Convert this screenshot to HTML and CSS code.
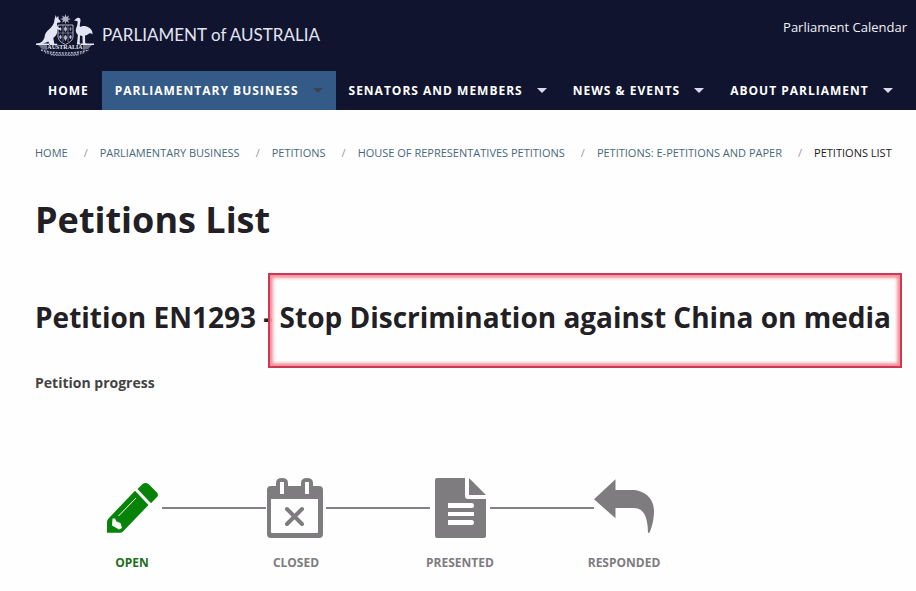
FILE: index.html
```
<!DOCTYPE html>
<html lang="en">
<head>
    <meta charset="UTF-8">
    <meta name="viewport" content="width=device-width, initial-scale=1.0">
    <title>Petitions List - Parliament of Australia</title>
    <link rel="stylesheet" href="styles.css">
</head>
<body>
    <header class="site-header">
        <div class="header-top">
            <a class="logo" href="#">
                <!-- Coat of arms -->
                <svg class="crest" viewBox="0 0 58 42" width="58" height="42" fill="currentColor" aria-hidden="true">
                    <path d="M29.500 0l1 3 2.500-1.500-1 2.700 3 .8-3 1 1 2.800-2.500-1.500-1 2.700-1-2.700-2.500 1.500 1-2.800-3-1 3-.8-1-2.700 2.500 1.500z" opacity=".75"/>
                    <!-- kangaroo -->
                    <path d="M18.500 5.500l1.200-4.500 1 3 1.500-2.300.5 3.500 2 2-.8 1.300-2.700.2c-.5 2 0 3.200 1 4.500l3 1.500-.5 1.300-3.500-.8c.4 2.200 0 4.500-1.400 6.200l-2.500 2.500 1 5.800h3v1.200h-7.500l-1.500-3.500C9.500 28.800 6.500 30.500 1 30.800v-1c4-.8 6.500-2.800 7.500-6.300.2-3.500 2-6.300 5-8.500 2.700-2.500 5-5.500 5-9.500z"/>
                    <!-- emu -->
                    <path d="M38 6.500l3-2.500c2-.7 3.700.2 3.500 2.500-.3 2.500-1 4.500-.5 6.500 1.500-1 4-1.300 6.500-.5 4 1.200 6.300 4 6 8-1-1-2-1.500-3-1.200-1.300 1.300-2.800 2-4.500 2.200l.2 7.500 2 1.500h-4.500l-.3-8.500-2.400-.5-.3 7.500 2 1.500h-4.800l1-9.500c-2.200-2-2.700-5-1.500-7.500 1-2.500 1.500-4.500 1-6.500z"/>
                    <!-- shield -->
                    <path d="M22 11h15v11c0 4-3 6.500-7.500 8.500C25 28.500 22 26 22 22z" fill="none" stroke="currentColor" stroke-width="1" opacity=".75"/>
                    <path d="M22 19h15M27 11v17M32 11v17" fill="none" stroke="currentColor" stroke-width=".8" opacity=".5"/>
                    <path d="M24.500 13v4M23 15h3M29.500 12.500l1.500 2.500-1.500 2.500-1.500-2.500zM34.500 13v4M33 15h3M24.500 21l1 2-1 2-1-2zM29.500 21l1.500 2.500-1.500 3-1.500-3zM34.500 21l1 2-1 2-1-2z" stroke="currentColor" stroke-width=".6" opacity=".8"/>
                    <!-- scroll -->
                    <path d="M0 29.500h13v1.500H0zM45 29.500h13v1.500H45z"/>
                    <path d="M2 31h9v5l-5-1zM56 31h-9v5l5-1z" opacity=".45"/>
                    <text class="crest-text" x="29" y="35" text-anchor="middle">AUSTRALIA</text>
                    <path d="M5 36c14 4 34 4 48 0" fill="none" stroke="currentColor" stroke-width="1.500" stroke-dasharray="2 1" opacity=".75"/>
                    <path d="M9 38.500c12 3 28 3 40 0M15 40.500c8 2 20 2 28 0" fill="none" stroke="currentColor" stroke-width="1.500" stroke-dasharray="1.500 1" opacity=".6"/>
                </svg>
                <span class="logo-text">PARLIAMENT of AUSTRALIA</span>
            </a>
            <a class="calendar-link" href="#">Parliament Calendar</a>
        </div>
        <nav class="main-nav">
            <a href="#">HOME</a>
            <a class="has-menu active" href="#">PARLIAMENTARY BUSINESS</a>
            <a class="has-menu" href="#">SENATORS AND MEMBERS</a>
            <a class="has-menu" href="#">NEWS &amp; EVENTS</a>
            <a class="has-menu" href="#">ABOUT PARLIAMENT</a>
        </nav>
    </header>

    <main class="content">
        <nav aria-label="Breadcrumb">
            <ol class="breadcrumbs">
                <li><a href="#">HOME</a></li>
                <li><a href="#">PARLIAMENTARY BUSINESS</a></li>
                <li><a href="#">PETITIONS</a></li>
                <li><a href="#">HOUSE OF REPRESENTATIVES PETITIONS</a></li>
                <li><a href="#">PETITIONS: E-PETITIONS AND PAPER</a></li>
                <li>PETITIONS LIST</li>
            </ol>
        </nav>

        <h1>Petitions List</h1>
        <h2>Petition EN1293 - <span class="highlight">Stop Discrimination against China on media</span></h2>

        <h3>Petition progress</h3>
        <ol class="progress">
            <li class="step current">
                <div class="step-icon">
                    <svg viewBox="0 0 60 60" width="60" height="60" aria-hidden="true">
                        <path fill="currentColor" d="M33 12.700L46.500 27 21 53.500q-1 1.200-3 1.200H5V44q0-2 1.500-3.500z"/>
                        <path fill="currentColor" d="M35.500 11l5-5q3-2 6 0l8.500 8.500q2 2.500 0 4.500l-6 6.300z"/>
                        <path fill="none" stroke="#fefefe" stroke-width="1" d="M16.500 38L34 20"/>
                        <path fill="#fefefe" d="M10.500 40.500h2.500l1.500 3 4 1.500 1.500 5-3 1.500-7-4z"/>
                    </svg>
                </div>
                <span class="step-label">OPEN</span>
            </li>
            <li class="step">
                <div class="step-icon">
                    <svg viewBox="0 0 60 60" width="60" height="60" aria-hidden="true">
                        <path fill="currentColor" d="M5 8h5V5q0-5 6-5t6 5v3h13V5q0-5 6-5t6 5v3h6q4 0 4 4v44q0 4-4 4H5q-4 0-4-4V12q0-4 4-4z"/>
                        <path fill="#fefefe" d="M5 21h47v33q0 1-1 1H6q-1 0-1-1zM14 4h4v12h-4zM39 4h4v12h-4z"/>
                        <path fill="none" stroke="currentColor" stroke-width="4" stroke-linecap="round" d="M21 31l15 15M36 31L21 46"/>
                    </svg>
                </div>
                <span class="step-label">CLOSED</span>
            </li>
            <li class="step">
                <div class="step-icon">
                    <svg viewBox="0 0 60 60" width="60" height="60" aria-hidden="true">
                        <path fill="currentColor" d="M7 0h28v18q0 3 3 3h18v37q0 2-2 2H7q-2 0-2-2V2q0-2 2-2zM39 0l17 17H39z"/>
                        <path fill="#fefefe" d="M18 25h24q2 0 2 2.500t-2 2.500H18zM18 34h26v4H18zM18 42h24q2 0 2 2.500t-2 2.500H18z"/>
                    </svg>
                </div>
                <span class="step-label">PRESENTED</span>
            </li>
            <li class="step">
                <div class="step-icon">
                    <svg viewBox="0 0 60 60" width="60" height="60" aria-hidden="true">
                        <path fill="currentColor" d="M0 21.300L21.500 1.300V12H38c12 0 22 8 22 21 0 8-2 16-4.500 21.700h-1.500C54 40 50 30 40 30H21.500v10.300z"/>
                    </svg>
                </div>
                <span class="step-label">RESPONDED</span>
            </li>
        </ol>
    </main>
</body>
</html>
```
FILE: styles.css
```
body {
    margin: 0;
    font-family: "Open Sans", Arial, sans-serif;
    color: #222024;
    background-color: #fefefe;
}
a {
    text-decoration: none;
}
.site-header {
    background-color: #10142e;
}
.header-top {
    display: flex;
    justify-content: space-between;
    align-items: flex-start;
    height: 58px;
    padding: 13px 9px 0 36px;
}
.logo {
    display: flex;
    align-items: center;
    gap: 8px;
    color: #e3e5f3;
}
.crest-text {
    font-family: "Liberation Serif", serif;
    font-size: 6px;
    font-weight: bold;
}
.logo-text {
    font-family: Lato, sans-serif;
    font-size: 17px;
    line-height: 44px;
}
.calendar-link {
    color: #f0f1f7;
    font-size: 13px;
    line-height: 28px;
}
.main-nav {
    display: flex;
    padding-left: 35px;
}
.main-nav a {
    display: flex;
    align-items: center;
    padding: 0 13px;
    color: #fff;
    font-size: 12px;
    font-weight: bold;
    line-height: 39px;
    letter-spacing: 1px;
    white-space: nowrap;
}
.main-nav .has-menu::after {
    content: "";
    margin-left: 14px;
    border: 5px solid transparent;
    border-top-color: #d8daec;
    border-bottom: 0;
}
.main-nav .active {
    background-color: #345b87;
}
.main-nav .active::after {
    border-top-color: #3a4350;
}
.content {
    padding: 32px 12px 0 35px;
}
.breadcrumbs {
    display: flex;
    margin: 0;
    padding: 0;
    list-style: none;
    font-size: 11px;
    line-height: 22px;
    white-space: nowrap;
}
.breadcrumbs a {
    color: #47697c;
}
.breadcrumbs li + li::before {
    content: "/";
    margin: 0 12px 0 16px;
    color: #999;
}
h1 {
    margin: 31px 0 0;
    font-size: 36px;
    line-height: 50px;
}
h2 {
    margin: 52px 0 0;
    font-size: 28px;
    line-height: 40px;
    white-space: nowrap;
}
.highlight {
    position: relative;
}
/* red marker frame drawn over the heading */
.highlight::after {
    content: "";
    position: absolute;
    inset: -25px -11px -32px -12px;
    border: 2px solid #cf3855;
    box-shadow: inset 0 0 3px 3px #f4939c;
}
h3 {
    margin: 36px 0 0;
    color: #444;
    font-size: 14px;
    line-height: 20px;
}
.progress {
    display: grid;
    grid-template-columns: repeat(4, 1fr);
    max-width: 656px;
    margin: 85px 0 0 15px;
    padding: 0;
    list-style: none;
}
.step {
    color: #7f7c80;
    text-align: center;
}
.step.current {
    color: #078407;
}
.step-icon {
    display: flex;
    align-items: center;
}
/* connector lines on both sides of each icon */
.step-icon::before,
.step-icon::after {
    content: "";
    flex: 1;
    height: 2px;
    background-color: #858287;
}
.step:first-child .step-icon::before,
.step:last-child .step-icon::after {
    background-color: transparent;
}
.step-label {
    display: block;
    margin-top: 15px;
    font-size: 12px;
    font-weight: bold;
    line-height: 20px;
}
.step.current .step-label {
    color: #1d701d;
}
```
